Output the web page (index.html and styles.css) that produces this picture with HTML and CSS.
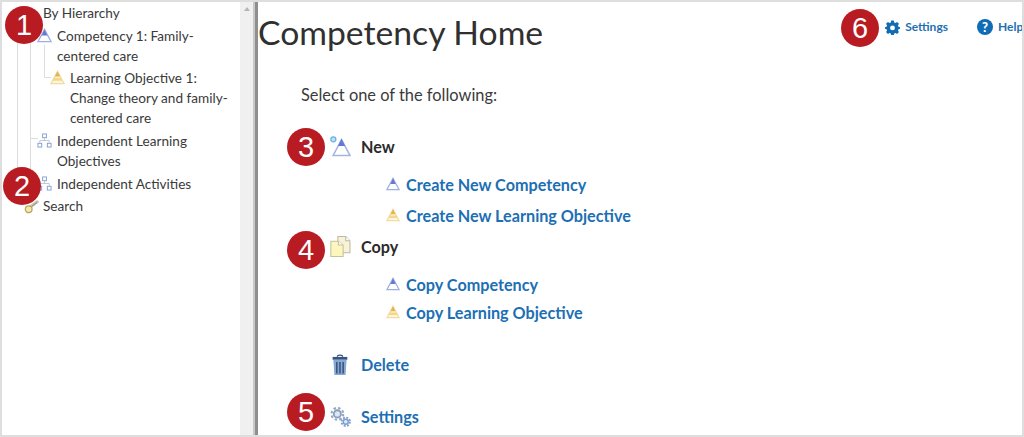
FILE: index.html
```html
<!DOCTYPE html>
<html lang="en">
<head>
    <meta charset="UTF-8">
    <meta name="viewport" content="width=device-width, initial-scale=1.0">
    <title>Competency Home</title>
    <link rel="stylesheet" href="styles.css">
</head>
<body>
    <svg class="defs" width="0" height="0">
        <symbol id="comp" viewBox="0 0 16 16">
            <path d="M8 1.5 15 14.5H1Z" fill="#fff" stroke="#9fb0e0" stroke-width="1.4"/>
            <path d="M8 1.5 11 8H5Z" fill="#6478d4"/>
        </symbol>
        <symbol id="obj" viewBox="0 0 16 16">
            <path d="M8 1.5 15 14.5H1Z" fill="#fdf6dc" stroke="#f0dca4" stroke-width="1.4"/>
            <path d="M8 1.5 10.8 7H5.2Z" fill="#e3b447"/>
            <path d="M4.2 8.5H11.8L13 11.5H3Z" fill="#f3d68a"/>
        </symbol>
        <symbol id="org" viewBox="0 0 16 16">
            <g fill="#fff" stroke="#7ea0d0" stroke-width="1">
                <rect x="6" y="1" width="4" height="4"/>
                <rect x="1" y="11" width="4" height="4"/>
                <rect x="11" y="11" width="4" height="4"/>
            </g>
            <path d="M8 5V8M3 11V8H13V11" fill="none" stroke="#c0c6cf" stroke-width="1"/>
        </symbol>
    </svg>

    <div class="frame">
        <aside class="sidebar">
            <div class="tree">
                <span class="tree-line line-a"></span>
                <span class="tree-line line-b"></span>
                <span class="tree-line line-c"></span>
                <span class="tree-tick tick-a"></span>
                <span class="tree-tick tick-b"></span>
                <div class="tree-row level-0"><span class="tree-text">By Hierarchy</span></div>
                <div class="tree-row level-1">
                    <svg class="tree-icon"><use href="#comp"/></svg>
                    <span class="tree-text">Competency 1: Family-centered care</span>
                </div>
                <div class="tree-row level-2">
                    <svg class="tree-icon"><use href="#obj"/></svg>
                    <span class="tree-text">Learning Objective 1: Change theory and family-centered care</span>
                </div>
                <div class="tree-row level-1">
                    <svg class="tree-icon"><use href="#org"/></svg>
                    <span class="tree-text">Independent Learning Objectives</span>
                </div>
                <div class="tree-row level-1">
                    <svg class="tree-icon"><use href="#org"/></svg>
                    <span class="tree-text">Independent Activities</span>
                </div>
                <div class="tree-row level-0">
                    <svg class="tree-icon search-icon" viewBox="0 0 16 16">
                        <path d="M6.5 8.5 14 3" stroke="#c9c6b4" stroke-width="3.4" stroke-linecap="round"/>
                        <path d="M8 8 14 3.6" stroke="#8c8f72" stroke-width="1"/>
                        <circle cx="5" cy="11" r="3.6" fill="#f6e6a8" stroke="#b5a463" stroke-width="1.3"/>
                    </svg>
                    <span class="tree-text">Search</span>
                </div>
            </div>
            <div class="scrollbar"><span class="scroll-arrow"></span></div>
        </aside>

        <main class="content">
            <header class="top">
                <h1>Competency Home</h1>
                <nav class="top-links">
                    <a class="top-link link-settings">
                        <svg class="top-icon" viewBox="0 0 16 16">
                            <path fill="#0f6cb5" fill-rule="evenodd" d="M6.6 0.6H9.4L9.8 2.6 11.2 3.2 12.9 2.1 14.9 4.1 13.8 5.8 14.4 7.2 16 7.6V9.4L14.4 9.8 13.8 11.2 14.9 12.9 12.9 14.9 11.2 13.8 9.8 14.4 9.4 16H6.6L6.2 14.4 4.8 13.8 3.1 14.9 1.1 12.9 2.2 11.2 1.6 9.8 0 9.4V7.6L1.6 7.2 2.2 5.8 1.1 4.1 3.1 2.1 4.8 3.2 6.2 2.6ZM8 5.8A2.6 2.6 0 1 0 8 11 2.6 2.6 0 1 0 8 5.8Z"/>
                        </svg>
                        Settings
                    </a>
                    <a class="top-link link-help">
                        <span class="help-icon">?</span>
                        Help
                    </a>
                </nav>
            </header>

            <p class="intro">Select one of the following:</p>

            <section class="group group-new">
                <div class="group-head">
                    <svg class="group-icon" viewBox="0 0 20 20">
                        <circle cx="3.2" cy="3.2" r="2.4" fill="#bfe0f7" stroke="#68b0e6" stroke-width="1.2"/>
                        <path d="M11 3.5 19 18.5H3Z" fill="#fff" stroke="#a3b6e2" stroke-width="1.5"/>
                        <path d="M11 2.5 14.4 9.5H7.6Z" fill="#6478d4"/>
                    </svg>
                    <span class="group-label">New</span>
                </div>
                <a class="sub-link sub-first"><svg class="sub-icon"><use href="#comp"/></svg>Create New Competency</a>
                <a class="sub-link sub-second"><svg class="sub-icon"><use href="#obj"/></svg>Create New Learning Objective</a>
            </section>

            <section class="group group-copy">
                <div class="group-head">
                    <svg class="group-icon" viewBox="0 0 20 20">
                        <path d="M7.5 .5H15L19 4.5V16H7.5Z" fill="#f8f3d6" stroke="#bdb99f" stroke-width="1"/>
                        <path d="M15 .5V4.5H19" fill="#fff" stroke="#bdb99f" stroke-width="1"/>
                        <path d="M.8 5H8L12.5 8.5V19.5H.8Z" fill="#fdf6bd" stroke="#c4c0a2" stroke-width="1"/>
                        <path d="M8 5V8.5H12.5" fill="#fff" stroke="#c4c0a2" stroke-width="1"/>
                    </svg>
                    <span class="group-label">Copy</span>
                </div>
                <a class="sub-link sub-first"><svg class="sub-icon"><use href="#comp"/></svg>Copy Competency</a>
                <a class="sub-link sub-third"><svg class="sub-icon"><use href="#obj"/></svg>Copy Learning Objective</a>
            </section>

            <div class="group-head head-delete">
                <svg class="group-icon" viewBox="0 0 20 20">
                    <path d="M7 2.5C7 .5 12 .5 12 2.5" fill="none" stroke="#33507a" stroke-width="1.2"/>
                    <path d="M2.5 2.8H16.5V5.5H2.5Z" fill="#34557f"/>
                    <path d="M3.2 5.5H15.8L14.8 20H4.2Z" fill="#86a8d2"/>
                    <path d="M6.5 7.5V18.5M9.5 7.5V18.5M12.5 7.5V18.5" stroke="#2c4a74" stroke-width="1.3"/>
                </svg>
                <a class="group-link">Delete</a>
            </div>

            <div class="group-head head-settings">
                <svg class="group-icon" viewBox="0 0 20 20">
                    <circle cx="7" cy="7.5" r="5.6" fill="none" stroke="#94a8c6" stroke-width="2" stroke-dasharray="2.4 2"/>
                    <circle cx="7" cy="7.5" r="3.4" fill="#dfe6f0" stroke="#8a9dba" stroke-width="1.8"/>
                    <circle cx="15" cy="15" r="4" fill="none" stroke="#7f9fcf" stroke-width="1.8" stroke-dasharray="1.8 1.35"/>
                    <circle cx="15" cy="15" r="2.4" fill="#e3eaf4" stroke="#7f9fcf" stroke-width="1.4"/>
                </svg>
                <a class="group-link">Settings</a>
            </div>
        </main>

        <span class="badge badge-1">1</span>
        <span class="badge badge-2">2</span>
        <span class="badge badge-3">3</span>
        <span class="badge badge-4">4</span>
        <span class="badge badge-5">5</span>
        <span class="badge badge-6">6</span>
    </div>
</body>
</html>
```

FILE: styles.css
```css
html, body {
    margin: 0;
    padding: 0;
}
body {
    font-family: Lato, "Open Sans", sans-serif;
    color: #333;
    background: #fff;
}
.defs {
    position: absolute;
}
.frame {
    position: relative;
    display: flex;
    width: 1024px;
    height: 437px;
    box-sizing: border-box;
    border: 2px solid #dedede;
    overflow: hidden;
}
.sidebar {
    display: flex;
    width: 256px;
    flex: none;
    box-sizing: border-box;
    border-right: 3px solid #8f8f8f;
}
.tree {
    position: relative;
    flex: 1;
    padding-top: 1px;
}
.tree-row {
    display: flex;
    font-size: 13.6px;
    line-height: 20px;
    color: #3a3a3a;
    margin-bottom: 2.7px;
}
.level-0 { padding-left: 41px; }
.level-1 { padding-left: 35px; padding-right: 40px; }
.level-2 { padding-left: 48px; padding-right: 8px; }
.tree-icon {
    width: 15px;
    height: 15px;
    flex: none;
    margin: 2px 5px 0 0;
}
.search-icon {
    position: absolute;
    left: 22px;
    margin: 3px 0 0;
}
.tree-line {
    position: absolute;
    width: 1px;
    background: #ddd;
}
.line-a { left: 15px; top: 39px; height: 150px; }
.line-b { left: 28px; top: 39px; height: 140px; }
.line-c { left: 42px; top: 43px; height: 33px; }
.tree-tick {
    position: absolute;
    height: 1px;
    background: #ddd;
}
.tick-a { left: 42px; top: 75px; width: 7px; }
.tick-b { left: 29px; top: 136px; width: 7px; }
.scrollbar {
    width: 13px;
    background: #f0f0f0;
    border-right: 2px solid #c8c8c8;
    display: flex;
    justify-content: center;
}
.scroll-arrow {
    margin-top: 5px;
    width: 0;
    height: 0;
    border: 3.5px solid transparent;
    border-top: 0;
    border-bottom: 4px solid #b5b5b5;
}
.content {
    flex: 1;
    min-width: 0;
}
.top {
    display: flex;
    justify-content: space-between;
    height: 61px;
}
h1 {
    margin: 8px 0 0;
    font-size: 33.7px;
    line-height: 44px;
    font-weight: 400;
    color: #303030;
    white-space: nowrap;
}
.top-links {
    display: flex;
    align-items: flex-start;
    padding-top: 16px;
}
.top-link {
    display: flex;
    align-items: center;
    font-size: 12px;
    line-height: 18px;
    font-weight: 700;
    color: #1d6fb3;
}
.link-help {
    margin-left: 29px;
    width: 45px;
    flex: none;
    white-space: nowrap;
}
.top-icon {
    width: 15px;
    height: 15px;
    margin-right: 5px;
}
.help-icon {
    display: block;
    width: 16px;
    height: 16px;
    flex: none;
    margin-right: 5px;
    border-radius: 50%;
    background: #0f6cb5;
    color: #fff;
    font-size: 13px;
    line-height: 16px;
    text-align: center;
    font-weight: 900;
}
.intro {
    margin: 22px 0 0 43px;
    font-size: 16.4px;
    line-height: 20px;
    color: #3a3a3a;
}
.group-new { margin-top: 29px; }
.group-copy { margin-top: 8px; }
.group-head {
    display: flex;
    align-items: center;
    padding-left: 72px;
    height: 24px;
}
.group-icon {
    width: 21px;
    height: 21px;
    flex: none;
    margin-right: 10px;
}
.group-label {
    font-size: 16.2px;
    font-weight: 700;
    color: #2b2b2b;
}
.group-link {
    font-size: 16.2px;
    font-weight: 700;
    color: #1d6fb3;
}
.sub-link {
    display: flex;
    align-items: center;
    padding-left: 128px;
    height: 22px;
    font-size: 16.2px;
    font-weight: 700;
    color: #1d6fb3;
}
.sub-icon {
    width: 14px;
    height: 14px;
    margin-right: 6px;
    flex: none;
}
.sub-first { margin-top: 15px; }
.sub-second { margin-top: 9px; }
.sub-third { margin-top: 6px; }
.head-delete { margin-top: 29px; }
.head-settings { margin-top: 28px; }
.badge {
    position: absolute;
    width: 38px;
    height: 38px;
    border-radius: 50%;
    background: #b81c22;
    color: #fff;
    font-size: 29px;
    line-height: 38px;
    text-align: center;
    font-family: "Liberation Sans", sans-serif;
}
.badge-1 { left: 3px; top: 4px; }
.badge-2 { left: 1px; top: 165px; }
.badge-3 { left: 285px; top: 126px; }
.badge-4 { left: 285px; top: 229px; }
.badge-5 { left: 285px; top: 391px; }
.badge-6 { left: 839px; top: 7px; }
```
